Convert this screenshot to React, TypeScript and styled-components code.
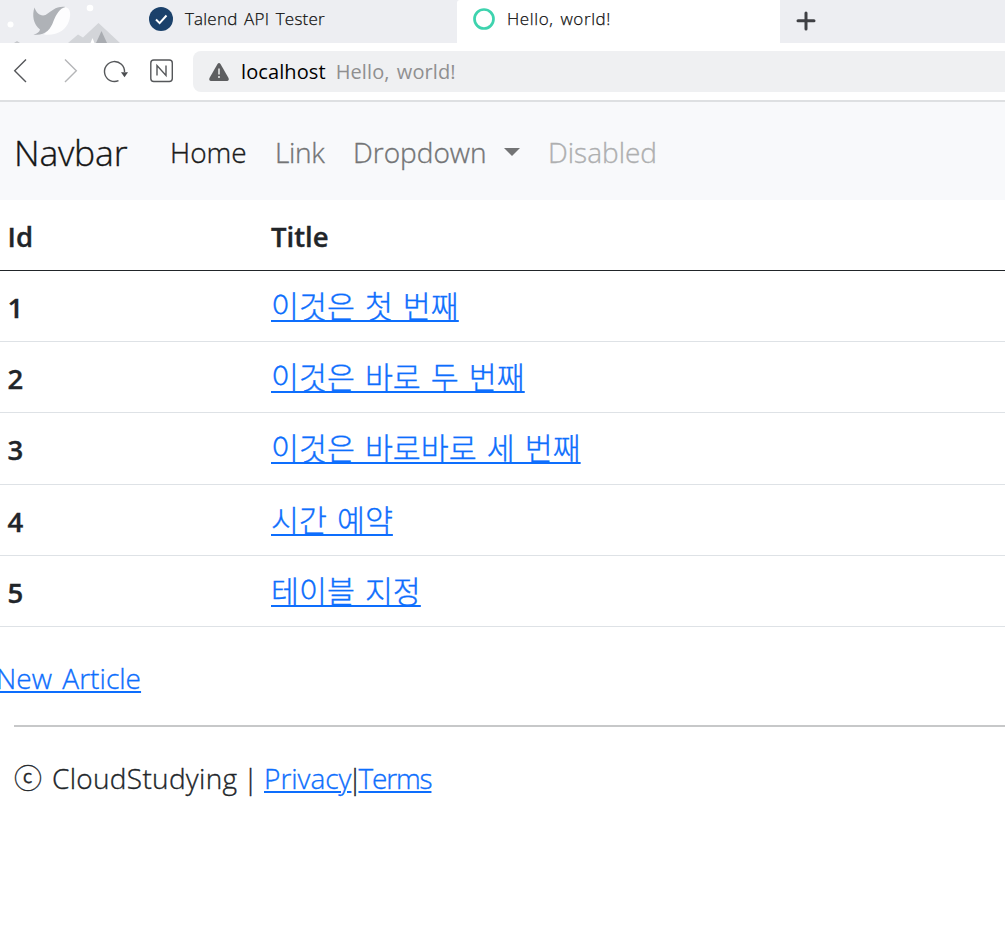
import React from "react";
import styled, { createGlobalStyle } from "styled-components";

const GlobalStyle = createGlobalStyle`
  * { box-sizing: border-box; }
  html, body { margin: 0; padding: 0; background: #fff; }
  body {
    overflow: hidden;
    font-family: "Open Sans", "Noto Sans CJK KR", sans-serif;
    font-size: 28px;
    font-weight: 300;
    -webkit-text-stroke-width: 0.35px;
    color: #212529;
  }
`;

const Window = styled.div`
  width: 100%;
  height: 927px;
  overflow: hidden;
`;

const TabStrip = styled.div`
  display: flex;
  height: 43px;
  background: #edeef2;
`;

const Skin = styled.svg`
  display: block;
  flex: none;
  width: 140px;
  height: 43px;
`;

const Tab = styled.div<{ $width: number; $active?: boolean }>`
  display: flex;
  flex: none;
  width: ${(p) => p.$width}px;
  height: 43px;
  padding: 0 0 5px ${(p) => (p.$active ? 15 : 8)}px;
  align-items: center;
  gap: 11px;
  background: ${(p) => (p.$active ? "#fff" : "transparent")};
  border-radius: ${(p) => (p.$active ? "3px 0 0 0" : "0")};
  svg { flex: none; display: block; }
`;

const TabTitle = styled.span<{ $track?: number }>`
  font-size: 17px;
  line-height: 24px;
  color: #111;
  white-space: nowrap;
  letter-spacing: ${(p) => p.$track ?? 0}px;
  word-spacing: 2px;
  -webkit-text-stroke-width: 0.25px;
`;

const NewTab = styled.svg`
  display: block;
  margin: 11px 0 0 16px;
`;

const Toolbar = styled.div`
  display: flex;
  height: 59px;
  padding-top: 8px;
  border-bottom: 2px solid #dee0e2;
  background: #fff;
`;

const NavIcons = styled.svg`
  display: block;
  flex: none;
  width: 193px;
  height: 42px;
`;

const AddressBar = styled.div`
  display: flex;
  flex: 1;
  height: 41px;
  padding-left: 15px;
  align-items: center;
  background: #eff0f2;
  border-radius: 8px 0 0 8px;
  white-space: nowrap;
  -webkit-text-stroke-width: 0;
  svg { flex: none; display: block; margin-right: 11px; }
`;

const Host = styled.span`
  font-size: 20px;
  font-weight: 400;
  color: #000;
  letter-spacing: 0.1px;
`;

const PageTitle = styled.span`
  margin-left: 10px;
  font-size: 20px;
  font-weight: 400;
  color: #8f8f90;
  letter-spacing: 0.1px;
  word-spacing: 2px;
`;

const Navbar = styled.nav`
  display: flex;
  height: 98px;
  padding: 2px 14px 0 14px;
  align-items: center;
  background: #f8f9fb;
  white-space: nowrap;
`;

const Brand = styled.span`
  width: 156px;
  font-size: 35.5px;
  line-height: 50px;
  letter-spacing: -0.2px;
  color: #151616;
`;

const NavLink = styled.span<{ $width: number; $color: string; $track?: number }>`
  display: flex;
  align-items: center;
  width: ${(p) => p.$width}px;
  line-height: 40px;
  color: ${(p) => p.$color};
  letter-spacing: ${(p) => p.$track ?? 0}px;
`;

const Caret = styled.span`
  margin-left: auto;
  margin-right: 28px;
  border-top: 8px solid #737475;
  border-left: 8px solid transparent;
  border-right: 8px solid transparent;
`;

const Table = styled.div`
  display: grid;
  grid-template-rows: 71px 71px 71px 72px 71px 71px;
`;

const Row = styled.div<{ $head?: boolean }>`
  display: grid;
  grid-template-columns: 271px 1fr;
  align-items: center;
  border-bottom: 1px solid ${(p) => (p.$head ? "#212529" : "#dee2e6")};
`;

const BoldCell = styled.span<{ $indent?: boolean }>`
  padding-left: ${(p) => (p.$indent ? 7.5 : 0)}px;
  padding-top: ${(p) => (p.$indent ? 3 : 4)}px;
  font-weight: 600;
  font-size: 27.5px;
  line-height: 40px;
`;

const Link = styled.a<{ $track?: number }>`
  color: #0d6efd;
  text-decoration: underline;
  text-decoration-thickness: 2px;
  text-underline-offset: 2px;
  white-space: nowrap;
  letter-spacing: ${(p) => p.$track ?? 0}px;
`;

const ArticleCell = styled.div`
  padding-bottom: 2px;
`;

const ArticleLink = styled(Link)`
  font-family: "Noto Sans CJK KR", sans-serif;
  font-size: 30.4px;
  font-weight: 300;
  line-height: 40px;
  word-spacing: 3.3px;
  text-decoration-skip-ink: none;
`;

const NewArticle = styled.div`
  height: 98px;
  padding-top: 31px;
  margin-left: -4px;
  line-height: 40px;
  word-spacing: 3px;
`;

const Footer = styled.footer`
  display: flex;
  margin-left: 14px;
  padding-top: 31px;
  border-top: 2px solid #c7c8c9;
  line-height: 40px;
  white-space: nowrap;
`;

const Copyright = styled.span`
  width: 38px;
`;

const Company = styled.span`
  width: 191px;
  letter-spacing: 0.3px;
`;

const Divider = styled.span<{ $width: number; $gap?: number }>`
  display: flex;
  justify-content: center;
  width: ${(p) => p.$width}px;
  margin-right: ${(p) => p.$gap ?? 0}px;
`;

const ARTICLES = [
  { id: 1, title: "이것은 첫 번째" },
  { id: 2, title: "이것은 바로 두 번째" },
  { id: 3, title: "이것은 바로바로 세 번째" },
  { id: 4, title: "시간 예약" },
  { id: 5, title: "테이블 지정" },
];

export default function App() {
  return (
    <Window>
      <GlobalStyle />
      <TabStrip>
        <Skin viewBox="0 0 140 43">
          <path d="M68 43 78 34.500l5 3L98.500 23 120 43Z" fill="#d3d5d9" />
          <path d="M96 43 101.500 31 107 43Z" fill="#a9acb1" />
          <path d="M90.500 43 92.500 38 94.500 43Z" fill="#fff" />
          <path d="M14 43 17 41 20 43Z" fill="#c5c7cb" />
          <circle cx="10.500" cy="24.500" r="3" fill="#fff" />
          <circle cx="90" cy="8" r="3.300" fill="#fff" />
          <path d="M44 34.500C50 30 52 7 65 7c6 1 6 8 4 14-3 9-12 15-25 13.500Z" fill="#fdfdfe" />
          <path d="M34.500 7.500c2 6 6 9 11 7.500 7-4 10-9 20-8-6 1.500-9 7-12 14-3 9-9 15-20 13.500 4-1 6-2.500 6.500-5C33 24 32 15 34.500 7.500Z" fill="#afb2b7" />
        </Skin>
        <Tab $width={317}>
          <svg width="26" height="26" viewBox="0 0 26 26">
            <circle cx="13" cy="13" r="12" fill="#1b416b" />
            <path d="m8 13.500 3.600 3.600L18.500 9.500" fill="none" stroke="#fff" strokeWidth="2" />
          </svg>
          <TabTitle $track={0.2}>Talend API Tester</TabTitle>
        </Tab>
        <Tab $width={323} $active>
          <svg width="24" height="24" viewBox="0 0 24 24">
            <circle cx="12" cy="12" r="9.500" fill="none" stroke="#3ed3ae" strokeWidth="2.700" />
          </svg>
          <TabTitle $track={0.6}>Hello, world!</TabTitle>
        </Tab>
        <NewTab width="20" height="20" viewBox="0 0 20 20">
          <path d="M10 2v16M2 9.700h16" stroke="#3f4044" strokeWidth="3" strokeLinecap="round" />
        </NewTab>
      </TabStrip>
      <Toolbar>
        <NavIcons viewBox="0 0 193 42" fill="none" stroke="#55575a" strokeWidth="1.400">
          <path d="M26 8.500 14.700 19.700 26 31" />
          <path d="M65 8.500 76.300 19.700 65 31" stroke="#b5b6b8" />
          <path d="M118.500 29.700A10 10 0 1 1 124.500 21" />
          <path d="M121 21.200h7l-3.500 5Z" fill="#4b4d50" stroke="none" />
          <rect x="150.800" y="9" width="21.500" height="21.500" rx="3" />
          <path d="M157 24.500V14.500L166 24.500V14.500" />
        </NavIcons>
        <AddressBar>
          <svg width="22" height="20" viewBox="0 0 22 20">
            <path d="M9.500 2q1.500-2 3 0l8 14q1 2.500-1.500 3H3q-2.500-.5-1.500-3Z" fill="#5d5e60" />
            <path d="M11 6.500v6M11 14v2" stroke="#d4d5d6" strokeWidth="1.800" />
          </svg>
          <Host>localhost</Host>
          <PageTitle>Hello, world!</PageTitle>
        </AddressBar>
      </Toolbar>
      <Navbar>
        <Brand>Navbar</Brand>
        <NavLink $width={105} $color="#1a1b1b">Home</NavLink>
        <NavLink $width={78} $color="#737475" $track={-0.3}>Link</NavLink>
        <NavLink $width={195} $color="#737475">
          Dropdown
          <Caret />
        </NavLink>
        <NavLink $width={110} $color="#aeafb0">Disabled</NavLink>
      </Navbar>
      <Table>
        <Row $head>
          <BoldCell $indent>Id</BoldCell>
          <BoldCell>Title</BoldCell>
        </Row>
        {ARTICLES.map((a) => (
          <Row key={a.id}>
            <BoldCell $indent>{a.id}</BoldCell>
            <ArticleCell>
              <ArticleLink>{a.title}</ArticleLink>
            </ArticleCell>
          </Row>
        ))}
      </Table>
      <NewArticle>
        <Link $track={0.05}>New Article</Link>
      </NewArticle>
      <Footer>
        <Copyright>ⓒ</Copyright>
        <Company>CloudStudying</Company>
        <Divider $width={15} $gap={6}>|</Divider>
        <Link>Privacy</Link>
        <Divider $width={7}>|</Divider>
        <Link $track={-1.15}>Terms</Link>
      </Footer>
    </Window>
  );
}
